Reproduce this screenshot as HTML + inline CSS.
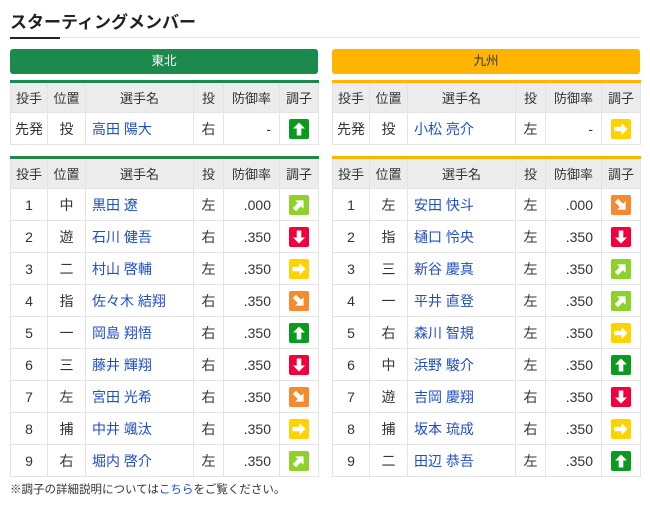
<!DOCTYPE html><html><head><meta charset="utf-8"><style>
*{margin:0;padding:0;box-sizing:border-box}
body{width:650px;height:506px;background:#fff;font-family:"Liberation Sans","Noto Sans CJK JP",sans-serif;color:#333;position:relative;overflow:hidden}
h1{position:absolute;left:10px;top:8px;font-size:17px;font-weight:bold;color:#222;letter-spacing:0}
.hl{position:absolute;left:10px;top:37px;width:630px;height:1px;background:#e6e6e6}
.hl2{position:absolute;left:10px;top:37px;width:50px;height:2px;background:#222}
.col{position:absolute;top:49px;width:308px}
.bar{height:25px;border-radius:3px;text-align:center;font-size:12.5px;line-height:25px}
table{border-collapse:collapse;width:308px;table-layout:fixed;font-size:14px}
td,th{border:1px solid #e3e3e3;text-align:center;height:32px;padding:0;font-weight:normal}
th{background:#ececec;height:31px;font-size:13px;color:#333}
td.n{text-align:left;padding-left:6px;color:#1f4fc4}
td.r{text-align:right;padding-right:8px}
.t1{margin-top:6px}.t2{margin-top:11px}
svg{display:block;margin:0 auto}
.note{position:absolute;left:10px;top:481px;font-size:11.5px;color:#333}
.note span{color:#1f4fc4}
</style></head><body>
<h1>スターティングメンバー</h1><div class="hl"></div><div class="hl2"></div>
<svg width="0" height="0" style="position:absolute"><defs>
<g id="ar"><path d="M16.5 10 L10.5 4 V7.7 H3.5 V12.3 H10.5 V16 Z" fill="#fff"/></g>
</defs></svg>
<div class="col" style="left:10px">
<div class="bar" style="background:#1b8a4c;color:#fff">東北</div>
<table class="t1" style="border-top:3px solid #1b8a4c"><colgroup><col style="width:37px"><col style="width:38px"><col style="width:108px"><col style="width:30px"><col style="width:56px"><col style="width:39px"></colgroup>
<tr><th>投手</th><th>位置</th><th>選手名</th><th>投</th><th>防御率</th><th>調子</th></tr>
<tr><td>先発</td><td>投</td><td class="n">高田 陽大</td><td>右</td><td class="r">-</td><td><svg width="20" height="20"><rect width="20" height="20" rx="2" fill="#0a9a1e"/><use href="#ar" transform="rotate(-90 10 10)"/></svg></td></tr>
</table>
<table class="t2" style="border-top:3px solid #1b8a4c"><colgroup><col style="width:37px"><col style="width:38px"><col style="width:108px"><col style="width:30px"><col style="width:56px"><col style="width:39px"></colgroup>
<tr><th>投手</th><th>位置</th><th>選手名</th><th>投</th><th>防御率</th><th>調子</th></tr>
<tr><td>1</td><td>中</td><td class="n">黒田 遼</td><td>左</td><td class="r">.000</td><td><svg width="20" height="20"><rect width="20" height="20" rx="2" fill="#8ed12a"/><use href="#ar" transform="rotate(-45 10 10)"/></svg></td></tr>
<tr><td>2</td><td>遊</td><td class="n">石川 健吾</td><td>右</td><td class="r">.350</td><td><svg width="20" height="20"><rect width="20" height="20" rx="2" fill="#f2003c"/><use href="#ar" transform="rotate(90 10 10)"/></svg></td></tr>
<tr><td>3</td><td>二</td><td class="n">村山 啓輔</td><td>左</td><td class="r">.350</td><td><svg width="20" height="20"><rect width="20" height="20" rx="2" fill="#ffd200"/><use href="#ar"/></svg></td></tr>
<tr><td>4</td><td>指</td><td class="n">佐々木 結翔</td><td>右</td><td class="r">.350</td><td><svg width="20" height="20"><rect width="20" height="20" rx="2" fill="#f58a30"/><use href="#ar" transform="rotate(45 10 10)"/></svg></td></tr>
<tr><td>5</td><td>一</td><td class="n">岡島 翔悟</td><td>右</td><td class="r">.350</td><td><svg width="20" height="20"><rect width="20" height="20" rx="2" fill="#0a9a1e"/><use href="#ar" transform="rotate(-90 10 10)"/></svg></td></tr>
<tr><td>6</td><td>三</td><td class="n">藤井 輝翔</td><td>右</td><td class="r">.350</td><td><svg width="20" height="20"><rect width="20" height="20" rx="2" fill="#f2003c"/><use href="#ar" transform="rotate(90 10 10)"/></svg></td></tr>
<tr><td>7</td><td>左</td><td class="n">宮田 光希</td><td>右</td><td class="r">.350</td><td><svg width="20" height="20"><rect width="20" height="20" rx="2" fill="#f58a30"/><use href="#ar" transform="rotate(45 10 10)"/></svg></td></tr>
<tr><td>8</td><td>捕</td><td class="n">中井 颯汰</td><td>右</td><td class="r">.350</td><td><svg width="20" height="20"><rect width="20" height="20" rx="2" fill="#ffd200"/><use href="#ar"/></svg></td></tr>
<tr><td>9</td><td>右</td><td class="n">堀内 啓介</td><td>左</td><td class="r">.350</td><td><svg width="20" height="20"><rect width="20" height="20" rx="2" fill="#8ed12a"/><use href="#ar" transform="rotate(-45 10 10)"/></svg></td></tr>
</table></div>
<div class="col" style="left:332px">
<div class="bar" style="background:#ffb400;color:#333">九州</div>
<table class="t1" style="border-top:3px solid #ffb400"><colgroup><col style="width:37px"><col style="width:38px"><col style="width:108px"><col style="width:30px"><col style="width:56px"><col style="width:39px"></colgroup>
<tr><th>投手</th><th>位置</th><th>選手名</th><th>投</th><th>防御率</th><th>調子</th></tr>
<tr><td>先発</td><td>投</td><td class="n">小松 亮介</td><td>左</td><td class="r">-</td><td><svg width="20" height="20"><rect width="20" height="20" rx="2" fill="#ffd200"/><use href="#ar"/></svg></td></tr>
</table>
<table class="t2" style="border-top:3px solid #ffb400"><colgroup><col style="width:37px"><col style="width:38px"><col style="width:108px"><col style="width:30px"><col style="width:56px"><col style="width:39px"></colgroup>
<tr><th>投手</th><th>位置</th><th>選手名</th><th>投</th><th>防御率</th><th>調子</th></tr>
<tr><td>1</td><td>左</td><td class="n">安田 快斗</td><td>左</td><td class="r">.000</td><td><svg width="20" height="20"><rect width="20" height="20" rx="2" fill="#f58a30"/><use href="#ar" transform="rotate(45 10 10)"/></svg></td></tr>
<tr><td>2</td><td>指</td><td class="n">樋口 怜央</td><td>左</td><td class="r">.350</td><td><svg width="20" height="20"><rect width="20" height="20" rx="2" fill="#f2003c"/><use href="#ar" transform="rotate(90 10 10)"/></svg></td></tr>
<tr><td>3</td><td>三</td><td class="n">新谷 慶真</td><td>左</td><td class="r">.350</td><td><svg width="20" height="20"><rect width="20" height="20" rx="2" fill="#8ed12a"/><use href="#ar" transform="rotate(-45 10 10)"/></svg></td></tr>
<tr><td>4</td><td>一</td><td class="n">平井 直登</td><td>左</td><td class="r">.350</td><td><svg width="20" height="20"><rect width="20" height="20" rx="2" fill="#8ed12a"/><use href="#ar" transform="rotate(-45 10 10)"/></svg></td></tr>
<tr><td>5</td><td>右</td><td class="n">森川 智規</td><td>左</td><td class="r">.350</td><td><svg width="20" height="20"><rect width="20" height="20" rx="2" fill="#ffd200"/><use href="#ar"/></svg></td></tr>
<tr><td>6</td><td>中</td><td class="n">浜野 駿介</td><td>左</td><td class="r">.350</td><td><svg width="20" height="20"><rect width="20" height="20" rx="2" fill="#0a9a1e"/><use href="#ar" transform="rotate(-90 10 10)"/></svg></td></tr>
<tr><td>7</td><td>遊</td><td class="n">吉岡 慶翔</td><td>右</td><td class="r">.350</td><td><svg width="20" height="20"><rect width="20" height="20" rx="2" fill="#f2003c"/><use href="#ar" transform="rotate(90 10 10)"/></svg></td></tr>
<tr><td>8</td><td>捕</td><td class="n">坂本 琉成</td><td>右</td><td class="r">.350</td><td><svg width="20" height="20"><rect width="20" height="20" rx="2" fill="#ffd200"/><use href="#ar"/></svg></td></tr>
<tr><td>9</td><td>二</td><td class="n">田辺 恭吾</td><td>左</td><td class="r">.350</td><td><svg width="20" height="20"><rect width="20" height="20" rx="2" fill="#0a9a1e"/><use href="#ar" transform="rotate(-90 10 10)"/></svg></td></tr>
</table></div>
<div class="note">※調子の詳細説明については<span>こちら</span>をご覧ください。</div>
</body></html>
